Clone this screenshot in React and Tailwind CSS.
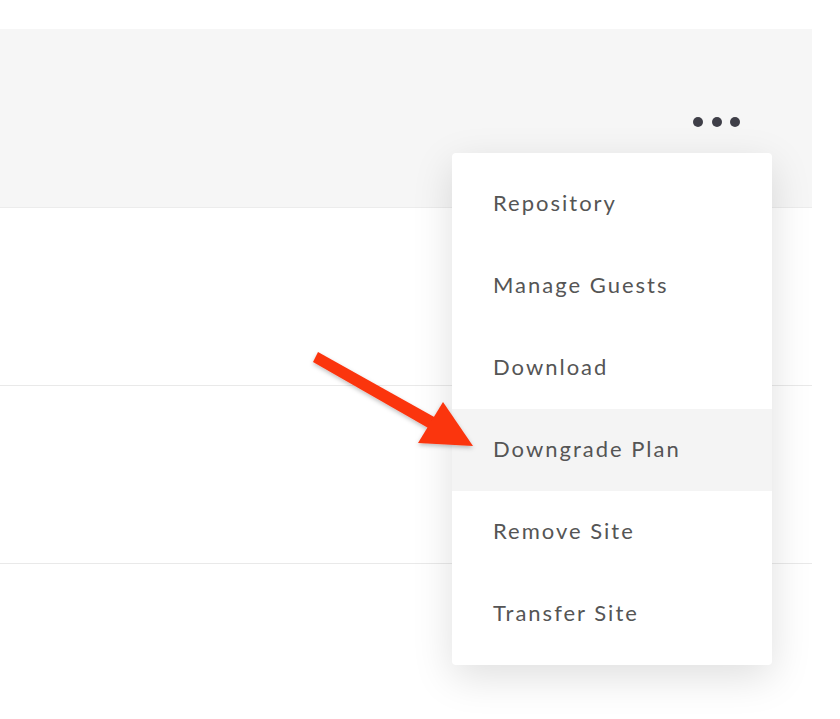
const items = [
  "Repository",
  "Manage Guests",
  "Download",
  "Downgrade Plan",
  "Remove Site",
  "Transfer Site",
]

export default function App() {
  return (
    <div className="relative w-[840px] h-[719px] overflow-hidden bg-white font-['Lato','Open_Sans',sans-serif]">
      {/* Table */}
      <div className="pt-[29px] w-[812px]">
        <div className="h-[179px] bg-[#f6f6f6] border-b border-[#ececec] flex justify-end items-start pt-[88px] pr-[72px]">
          <div className="flex gap-[8.5px]">
            <span className="w-[10px] h-[10px] rounded-full bg-[#3f3f48]" />
            <span className="w-[10px] h-[10px] rounded-full bg-[#3f3f48]" />
            <span className="w-[10px] h-[10px] rounded-full bg-[#3f3f48]" />
          </div>
        </div>
        <div className="h-[178px] border-b border-[#e9e9e9]" />
        <div className="h-[178px] border-b border-[#e9e9e9]" />
      </div>

      {/* Menu */}
      <div className="absolute left-[452px] top-[153px] w-[320px] rounded-[4px] bg-white py-[10px] shadow-[0_12px_40px_rgba(0,0,0,0.13)]">
        {items.map((item) => (
          <div
            key={item}
            className={
              item === "Downgrade Plan"
                ? "h-[82px] flex items-center pl-[41px] pb-[4px] bg-[#f4f4f4] text-[22px] tracking-[2px] text-[#555555]"
                : "h-[82px] flex items-center pl-[41px] pb-[4px] text-[22px] tracking-[2px] text-[#555555]"
            }
          >
            {item}
          </div>
        ))}
      </div>

      {/* Arrow */}
      <svg
        className="absolute left-0 top-0"
        width="840"
        height="719"
        viewBox="0 0 840 719"
      >
        <defs>
          <filter id="sh" x="-20%" y="-20%" width="140%" height="140%">
            <feDropShadow dx="0" dy="2" stdDeviation="2" floodColor="#000" floodOpacity="0.25" />
          </filter>
        </defs>
        <g filter="url(#sh)" fill="#fb3410">
          <polygon points="313,362 318,352 436,418 430,429" />
          <polygon points="473,446 418,443 443,402" />
        </g>
      </svg>
    </div>
  )
}
